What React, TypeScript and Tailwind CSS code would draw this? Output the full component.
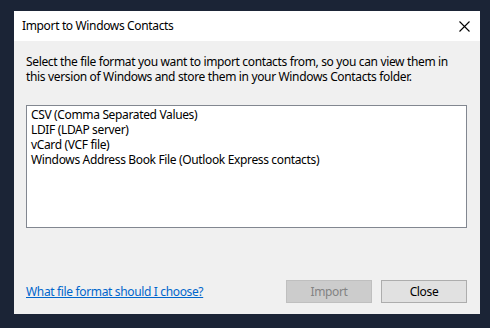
import React from 'react';

const formats = [
  'CSV (Comma Separated Values)',
  'LDIF (LDAP server)',
  'vCard (VCF file)',
  'Windows Address Book File (Outlook Express contacts)',
];

export default function App() {
  return (
    <div
      className="w-[490px] h-[328px] bg-[#1b2436] pt-[11px] pl-[14px] tracking-[-0.35px]"
      style={{ fontFamily: '"Segoe UI", "Noto Sans", "Open Sans", sans-serif' }}
    >
      <div className="w-[466px] h-[303px] bg-[#f0f0f0] flex flex-col">
        {/* title bar */}
        <div className="h-[30px] bg-white flex items-center justify-between pl-[8px] pr-[10px]">
          <span className="text-[12px] text-black">Import to Windows Contacts</span>
          <svg width="11" height="11" viewBox="0 0 11 11" className="mt-[1px]">
            <path d="M0.5 0.5 L10.5 10.5 M10.5 0.5 L0.5 10.5" stroke="#000" strokeWidth="1.1" />
          </svg>
        </div>

        <div className="flex-1 flex flex-col pl-[12px] pr-[13px] pt-[13px] pb-[11px]">
          <p className="text-[12px] leading-[15px] text-black whitespace-nowrap">
            Select the file format you want to import contacts from, so you can view them in
            <br />
            this version of Windows and store them in your Windows Contacts folder.
          </p>

          <div className="mt-[21px] h-[123px] bg-white border border-[#828790] pt-[1px] pl-[4px]">
            {formats.map((f) => (
              <div key={f} className="text-[12px] leading-[15px] text-black whitespace-nowrap">
                {f}
              </div>
            ))}
          </div>

          <div className="mt-auto flex items-center justify-between">
            <a href="#" className="text-[12px] text-[#0066cc] underline">
              What file format should I choose?
            </a>
            <div className="flex gap-[9px]">
              <button
                disabled
                className="w-[86px] h-[23px] bg-[#cccccc] border border-[#bfbfbf] text-[12px] text-[#838383]"
              >
                Import
              </button>
              <button className="w-[86px] h-[23px] bg-[#e1e1e1] border border-[#adadad] text-[12px] text-black">
                Close
              </button>
            </div>
          </div>
        </div>
      </div>
    </div>
  );
}
